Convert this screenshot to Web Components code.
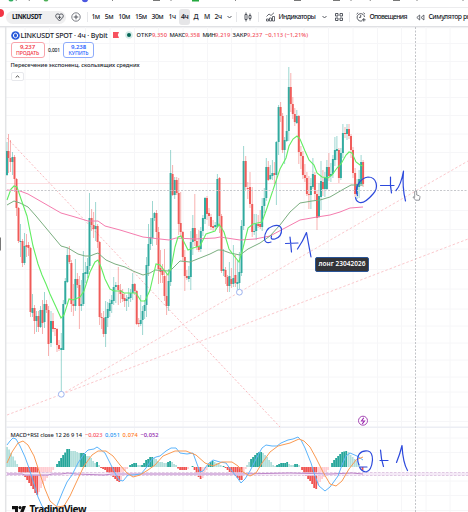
<!DOCTYPE html>
<html lang="ru">
<head>
<meta charset="utf-8">
<title>LINKUSDT</title>
<style>
    body { margin: 0; width: 468px; height: 512px; overflow: hidden; background: #fff; font-family: "Noto Sans", "Open Sans", sans-serif; color: #20232b; }
</style>
</head>
<body>
<trading-app></trading-app>

<script>
// text that is spread over a given width
class TvLabel extends HTMLElement {
    connectedCallback() {
        const root = this.attachShadow({ mode: 'open' });
        root.innerHTML = `<style>:host { display: block; flex: none; white-space: nowrap; line-height: 1.2; } span { display: inline-block; }</style><span><slot></slot></span>`;
        const w = +this.getAttribute('w');
        if (!w) return;
        const span = root.querySelector('span');
        this.style.width = w + 'px';
        const natural = span.getBoundingClientRect().width;
        span.style.letterSpacing = ((w - natural) / this.textContent.length).toFixed(3) + 'px';
    }
}

class BrowserStrip extends HTMLElement {
    constructor() {
        super();
        this.attachShadow({ mode: 'open' }).innerHTML = `
            <style>
                :host { display: block; flex: none; height: 8px; box-sizing: border-box; border-bottom: 1px solid #ececee; }
                svg { display: block; }
            </style>
            <svg width="468" height="7">
                <circle cx="11" cy="-1" r="2.6" fill="#2fae60"/><circle cx="46" cy="-1" r="2.5" fill="#4cae55"/>
                <circle cx="85" cy="-1" r="3.2" fill="#4b57e0"/><rect x="153" y="-3" width="7" height="4" fill="#777"/>
                <rect x="192" y="-3" width="7" height="4.5" fill="#24a83f"/><path d="M0 0l1-1M16 1l1-2M29 1l1-2M112.500 1v-1M171 1v-1M235 0l1 1M351 1v-1M370 1l1-2M417 1v-1M463 1v-1" stroke="#666" stroke-width=".8"/>
                <path d="M333 .5h7M393 .5h7M294 .5h7" stroke="#777"/>
            </svg>`;
    }
}

class ToolBar extends HTMLElement {
    constructor() {
        super();
        this.attachShadow({ mode: 'open' }).innerHTML = `
            <style>
                :host { display: flex; flex: none; align-items: center; height: 19px; padding-left: 6px; box-sizing: border-box; border-bottom: 1px solid #e0e1e4; box-shadow: 0 1px 1px #f1f1f3; font-size: 6.800px; font-weight: 500; position: relative; }
                .pill { display: flex; flex: none; align-items: center; width: 60px; height: 13px; padding-left: 6px; box-sizing: border-box; border-radius: 7px; background: #efeff0; font-weight: 700; font-size: 6.500px; gap: 13px; }
                svg { flex: none; fill: none; stroke: #444851; stroke-width: .9; }
                .line { width: 1px; height: 10px; background: #e6e7ea; flex: none; }
                .on { background: #e6e6e8; border-radius: 3px; padding: 3.500px 2px; margin: 0 -2px; }
                .badge { position: absolute; left: -5px; top: 1px; width: 9px; height: 8px; border-radius: 4px; background: #f23645; }
                .times { display: flex; align-items: center; margin-left: 4px; }
                b { font-weight: 600; }
            </style>
            <i class="badge"></i>
            <div class="pill"><tv-label w="29.500">LINKUSDT</tv-label>
                <svg width="9" height="9" viewBox="0 0 9 9"><path d="M4.500 8L1 4.200Q.2 2.500 1.500 1.200Q3 .5 4.500 1.500Q6 .5 7.500 1.200Q8.800 2.500 8 4.200zM4.500 2.500v3.500M2.800 4.300h3.400"/></svg>
            </div>
            <svg width="10" height="10" viewBox="0 0 10 10" style="margin-left:5px"><circle cx="5" cy="5" r="4.200" stroke-width=".7"/><path d="M5 2.700v4.600M2.700 5h4.600"/></svg>
            <i class="line" style="margin-left:5.500px"></i>
            <div class="times">
                <tv-label w="8" style="margin-right:5.300px">1м</tv-label>
                <tv-label w="8.500" style="margin-right:5px">5м</tv-label>
                <tv-label w="11.500" style="margin-right:5.300px">10м</tv-label>
                <tv-label w="11.500" style="margin-right:5px">15м</tv-label>
                <tv-label w="11.500" style="margin-right:5.300px">30м</tv-label>
                <tv-label w="7.500" style="margin-right:5px">1ч</tv-label>
                <div class="on" style="margin-right:3px"><tv-label w="7.500"><b>4ч</b></tv-label></div>
                <tv-label w="5" style="margin-right:5.500px">Д</tv-label>
                <tv-label w="6" style="margin-right:4.500px">М</tv-label>
                <tv-label w="7.500">2ч</tv-label>
            </div>
            <svg width="5" height="4" viewBox="0 0 5 4" style="margin-left:5px"><path d="M.5 1l2 2 2-2"/></svg>
            <i class="line" style="margin-left:4px"></i>
            <svg width="8" height="10" viewBox="0 0 8 10" style="margin-left:7.500px"><path d="M1 2.500h2v5H1zM2 .5v2M2 7.500v2M5 3.500h2v3H5zM6 1.500v2M6 6.500v2"/></svg>
            <i class="line" style="margin-left:6px"></i>
            <svg width="9" height="10" viewBox="0 0 9 10" style="margin-left:6.500px"><path d="M.5 9V7h2v2zM3.500 9V6h2v3zM6.500 9V4.500h2V9zM.5 4.500L3 2l2 1.500L8 .7" stroke-width=".8"/></svg>
            <tv-label w="37" style="margin-left:3.500px">Индикаторы</tv-label>
            <svg width="5" height="4" viewBox="0 0 5 4" style="margin-left:6.500px"><path d="M.5 1l2 2 2-2"/></svg>
            <svg width="8" height="8" viewBox="0 0 8 8" style="margin-left:8px"><path d="M.5.5h2.500v2.500H.5zM5 .5h2.500v2.500H5zM.5 5h2.500v2.500H.5zM5 5h2.500v2.500H5z"/></svg>
            <i class="line" style="margin-left:6.500px"></i>
            <svg width="10" height="10" viewBox="0 0 10 10" style="margin-left:5.500px"><path d="M6.200 8.800A3.700 3.700 0 1 1 8.500 5M4.700 3v2.400H3M.6 2.200L2.200.7M7.400.7L9 2.200M7.800 6v3.500M6 7.800h3.600" /></svg>
            <tv-label w="37.500" style="margin-left:3.500px">Оповещения</tv-label>
            <svg width="9" height="7" viewBox="0 0 9 7" style="margin-left:9.500px"><path d="M3.700 1v5L.8 3.500zM7.900 1v5L5 3.500z" stroke-width=".8"/></svg>
            <tv-label w="54" style="margin-left:3px">Симулятор рынка</tv-label>`;
    }
}

class ChartLegend extends HTMLElement {
    constructor() {
        super();
        this.attachShadow({ mode: 'open' }).innerHTML = `
            <style>
                :host { display: flex; flex-direction: column; font-size: 5.800px; font-weight: 500; }
                .row { display: flex; align-items: center; }
                .title { font-size: 7.100px; }
                svg { display: block; flex: none; }
                .red { color: #f2505c; }
                .btn { box-sizing: border-box; height: 16px; border: 1px solid; border-radius: 3px; display: flex; flex-direction: column; align-items: center; justify-content: center; background: #fff; font-size: 5.200px; }
                .btn tv-label { line-height: 6.500px; }
                .sell { width: 34px; color: #f23645; border-color: #f9a4ab; }
                .buy { width: 31px; color: #2962ff; border-color: #8dabfb; }
                .btn b { font-weight: 600; font-size: 6px; }
                .fold { width: 13px; height: 9px; box-sizing: border-box; border: 1px solid #e7e8ec; border-radius: 2px; background: #fff; margin-top: 3.500px; display: flex; align-items: center; justify-content: center; }
            </style>
            <div class="row" style="height:12px">
                <svg width="9" height="9" viewBox="0 0 9 9"><circle cx="4.500" cy="4.500" r="4.300" fill="#2a5ada"/><path d="M4.500 2.200l2 1.150v2.300l-2 1.150-2-1.150v-2.300z" fill="none" stroke="#fff" stroke-width="1"/></svg>
                <tv-label class="title" w="87" style="margin-left:1px">LINKUSDT SPOT · 4ч · Bybit</tv-label>
                <svg width="6" height="6" viewBox="0 0 6 6" style="margin-left:5.500px"><path d="M0 0h6L4.800 3 6 6H0z" fill="#f7525f"/></svg>
                <svg width="8" height="8" viewBox="0 0 8 8" style="margin-left:5.500px"><circle cx="4" cy="4" r="3.800" fill="#d5ebe8"/><circle cx="4" cy="4" r="2" fill="#056656"/></svg>
                <tv-label w="15.500" style="margin-left:4px">ОТКР</tv-label><tv-label class="red" w="15">9,350</tv-label>
                <tv-label w="15.500" style="margin-left:2.500px">МАКС</tv-label><tv-label class="red" w="15">9,358</tv-label>
                <tv-label w="12.500" style="margin-left:2.500px">МИН</tv-label><tv-label class="red" w="15.500">9,219</tv-label>
                <tv-label w="14.500" style="margin-left:2px">ЗАКР</tv-label><tv-label class="red" w="15.500">9,237</tv-label>
                <tv-label class="red" w="43" style="margin-left:2.500px">−0,113 (−1,21%)</tv-label>
            </div>
            <div class="row" style="margin-top:1px">
                <div class="btn sell"><tv-label w="15"><b>9,237</b></tv-label><tv-label w="23">ПРОДАТЬ</tv-label></div>
                <tv-label w="12" style="margin:0 3px 0 3.500px;font-size:5px">0,001</tv-label>
                <div class="btn buy"><tv-label w="15"><b>9,238</b></tv-label><tv-label w="20">КУПИТЬ</tv-label></div>
            </div>
            <tv-label w="129" style="margin-top:4px;font-size:5.800px">Пересечение экспоненц. скользящих средних</tv-label>
            <div class="fold"><svg width="5" height="3" viewBox="0 0 5 3"><path d="M.7 2.500l1.800-1.700 1.800 1.700" fill="none" stroke="#333" stroke-width=".9"/></svg></div>`;
    }
}

// x, open, close, high, low
const CANDLES = [
    [7,175,151,142,176],[8.5,151,158,134,173],[10.5,158,162,140,172],[12.5,162,157,152,175],[14.5,157,179,155,192],[16.5,179,208,178,216],
    [18.5,208,241,207,243],[20.5,242,241,224,257],[22.5,241,263,239,267],[24.5,263,246,233,265],[26.5,245,247,234,257],[28.5,245,248,242,256],
    [30.5,248,312,247,317],[32.5,313,308,294,317],[34.5,308,321,305,334],[36.5,321,316,311,332],[38.5,316,327,311,332],[40.5,327,310,306,328],
    [42.5,310,323,300,334],[44.5,322,304,292,328],[46.5,304,310,300,313],[48.5,310,344,306,356],[51,343,321,311,347],[53,321,329,313,332],
    [55,328,329,328,336],[57,329,345,328,352],[59,345,349,340,351],[61.3,350,348,333,392],[63.3,350,304,300,350],[65.3,304,281,278,305],
    [67.3,282,255,248,283],[69.4,255,262,246,264],[71.4,263,304,260,312],[73.4,304,306,284,316],[75.4,306,279,259,311],[77.4,279,285,273,288],
    [79.4,285,306,276,329],[81.4,306,304,280,311],[83.4,304,273,251,306],[85.4,274,272,262,283],[87.5,274,266,258,278],[89.5,266,218,193,270],
    [91.6,218,225,209,231],[93.6,225,229,212,238],[95.6,229,226,202,241],[97.6,226,242,224,248],[99.6,242,317,241,325],[101.6,317,318,313,329],
    [103.6,318,334,311,337],[105.6,334,317,301,347],[107.7,318,309,302,327],[109.7,311,303,299,317],[111.7,304,300,295,313],[113.7,301,287,277,305],
    [115.8,287,285,282,303],[118.3,285,290,267,305],[120.5,290,294,284,303],[122.6,294,299,289,302],[124.6,298,301,293,307],[126.6,301,299,295,311],
    [128.6,299,297,288,307],[130.6,298,293,289,302],[132.7,293,284,273,300],[134.7,284,291,283,295],[136.7,291,324,290,325],[138.7,323,324,318,327],
    [140.7,324,320,295,326],[142.6,320,311,306,335],[144.6,311,305,300,319],[146.5,305,265,257,317],[148.5,266,244,224,276],[150.5,244,237,218,250],
    [152.5,238,218,201,246],[154.5,218,213,212,221],[156.5,213,232,210,245],[158.5,232,269,227,284],[160.5,268,272,250,283],[162.5,271,275,264,283],
    [164.5,276,296,249,301],[166.6,296,306,273,315],[168.6,306,281,269,311],[170.6,282,173,150,286],[172.6,174,195,165,196],[174.7,195,180,177,199],
    [176.7,180,193,177,195],[178.7,193,224,178,235],[180.7,223,232,192,237],[182.8,232,257,231,262],[184.8,257,276,250,291],[186.8,276,278,270,280],
    [188.8,279,276,266,282],[190.8,277,242,231,290],[192.8,242,228,215,255],[194.8,228,241,194,246],[196.8,241,247,234,250],[198.8,246,250,230,252],
    [200.8,249,231,227,252],[202.9,231,218,215,236],[205,219,198,197,224],[207,198,214,196,220],[209,213,216,208,226],[211,217,227,214,230],
    [213.1,226,228,220,231],[215.2,227,225,222,230],[217.4,227,179,174,228],[219.5,178,216,177,233],[221.5,216,271,214,273],[223.5,271,269,249,276],
    [225.5,270,277,267,284],[227.5,277,286,275,292],[229.4,286,276,262,292],[231.4,279,284,268,288],[233.4,284,278,245,287],[235.4,275,283,255,287],
    [237.4,284,282,260,290],[239.4,283,272,252,290],[241.5,273,226,220,276],[243.6,226,161,146,230],[245.7,161,187,156,190],[247.8,188,189,182,199],
    [250,187,204,172,208],[252.2,204,232,187,237],[254.2,232,231,214,235],[256.2,231,224,214,240],[258.2,224,226,215,228],[260.2,224,227,210,229],
    [262.2,227,206,198,231],[264.3,206,198,188,213],[266.3,198,167,158,201],[268.3,167,180,161,181],[270.3,179,175,165,180],[272.4,176,173,160,180],
    [274.4,173,175,162,184],[276.4,175,142,141,205],[278.6,142,107,105,155],[280.6,107,116,102,122],[282.6,116,150,113,153],[284.6,150,140,137,164],
    [286.7,141,131,115,142],[288.8,131,87,67,141],[290.8,87,104,73,112],[292.8,104,114,97,119],[294.8,114,122,108,126],[296.8,123,116,110,124],
    [298.8,116,152,115,164],[300.9,152,156,146,169],[302.9,156,175,151,179],[304.9,175,178,164,182],[306.9,178,194,172,196],[308.9,194,195,176,209],
    [310.9,195,186,178,209],[312.9,187,174,158,189],[314.9,175,194,172,201],[317,194,218,190,230],[319,217,196,183,218],[321,197,181,161,210],
    [322.9,182,189,170,196],[324.9,189,178,172,197],[326.9,189,167,160,190],[328.9,167,176,153,181],[330.9,176,174,163,182],[332.9,174,159,155,178],
    [334.9,160,150,137,166],[336.9,151,149,136,160],[338.9,150,178,148,183],[340.9,178,153,148,180],[342.9,153,133,124,158],[345,133,134,127,138],
    [347,134,129,124,140],[349,129,136,124,139],[351,136,150,134,158],[353,150,173,147,178],[355.1,173,194,168,197],[357.1,194,184,179,199],
    [359.1,187,179,170,198],[361.1,184,162,155,186],[363.1,162,184,160,187]
];

const FAST = '7,200 11,189 14,186 17,187 21,199 27,216 33,246 38,264 42,275 46,284 50,294 56,307 61,318 64,315 69,299 73,300 80,297 84,291 90,272 95,262 98,260 101,267 105,279 110,289 114,291 121,291 124,293 130,293 136,293 141,301 145,301 150,290 156,264 160,265 168,275 171,268 175,247 178,237 181,236 185,244 188,250 193,248 200,246 206,234 215,231 219,224 224,232 229,249 235,257 239,262 243,248 248,228 253,224 262,222 267,208 275,184 280,169 286,158 289,146 293,139 297,136 300,139 305,151 309,160 314,165 317,173 322,177 328,178 332,175 337,168 341,164 346,155 349,152 352,153 356,162 360,165 363,166';
const MID = '7,205 14,201 20,203 28,207 36,216 61,246 68,248 78,254 85,256 90,256 95,254 98,253 106,260 115,264 125,267 133,271 143,275 150,273 155,270 168,271 172,269 180,261 190,262 200,258 210,254 218,250 222,250 230,253 240,255 248,249 260,243 270,236 280,225 290,212 300,203 312,201 320,200 330,197 342,190 351,185 363,185';
const SLOW = '7,190 20,191 28,194 61,213 75,217 88,221 98,221 105,226 120,230 143,237 160,239 169,240 176,238 195,239 215,238 220,237 240,240 255,239 270,236 285,228 300,220 317,217 330,215 340,212 350,208 363,207';
const MACD = '7,445 10,441 13,438 16,439 20,446 25,457 29,468 33,481 38,497 42,506 50,514 56,508 63,491 67,482 72,475 78,463 84,454 88,450 94,449 97,447 101,450 105,453 110,463 116,475 119,480 123,481 128,475 133,475 141,474 146,468 152,459 156,457 160,456 166,451 171,448 176,448 180,453 187,454 193,453 197,464 200,472 203,471 208,464 213,460 220,462 226,463 231,470 236,476 241,483 245,479 250,471 256,459 262,448 266,445 272,446 277,446 281,443 288,440 293,439 298,437 301,440 305,448 311,463 315,476 319,486 325,491 330,487 338,476 342,465 346,456 350,453 357,456 363,460';
const SIGNAL = '7,463 12,452 18,443 23,441 28,445 34,456 40,474 45,489 50,501 57,507 64,506 70,496 76,483 84,466 92,455 98,451 106,451 113,456 120,465 127,473 133,477 140,475 148,470 155,465 163,456 175,451 186,451 196,455 205,463 213,466 222,462 232,462 238,466 243,472 250,476 256,473 262,463 270,452 278,446 290,443 299,439 304,441 310,447 316,458 323,472 330,484 336,486 342,481 349,469 356,460 363,457';
const RSI = '7,474 22,474 25,475 48,475 52,474 61,474 68,473 76,474 104,475 112,474 170,474 200,474 240,474 290,473 330,474 352,473 363,474';

// start x, colour, bar heights (negative goes under the zero line)
const G = '#26a69a', g = '#b2dfdb', R = '#f05350', r = '#ffcdd2';
const BARS = [
    [7,g,[20,17.5,14,10.5,6.5,3]],[19,R,[-5,-6,-8,-10,-13,-16,-19,-22,-26,-28]],[39,r,[-25,-21,-17,-14,-11,-8,-5,-3]],
    [57,G,[3,6,9,12,14.5,18,18]],[71,g,[16,16,16,15,14]],[81,G,[14,14,13]],[87,g,[11,11,9,6,4]],[97,G,[5]],[99,g,[2]],
    [101,R,[-1,-2,-3,-5,-6,-8,-10,-12,-14,-15]],[121,r,[-13,-9,-4,-2]],[130,G,[2,3,4,4]],[138,g,[2,2]],[142,G,[2,4,7,8,10,10]],[154,g,[9,8,6,5,5,4,4]],
    [168,G,[5,6]],[172,g,[5,3,2]],[178,R,[-1.5,-3,-3,-3,-3]],[188,r,[-2]],[192.500,G,[1]],[194.500,R,[-3,-7,-10,-12]],[202.600,r,[-11,-7,-3]],
    [208.500,G,[2,5,6]],[214.600,g,[5,4,4,2]],[223.500,G,[1]],[225.500,R,[-1,-3,-5,-7,-8,-9,-11,-13,-13]],[243.700,r,[-7,-2]],
    [247,g,[2,5]],[251,G,[8,10,12,14,15,15]],[263,g,[14,12,10,7,5,2,1]],[277,G,[2,3,4,4,4,5]],[289,g,[3,2,2]],[295,G,[3,3]],[299,g,[2]],
    [302,R,[-3,-7,-9,-12,-14,-17,-21,-22]],[318,r,[-18,-15,-12,-10,-6,-3]],[332,G,[4,7,9,11,13,15,15.5,16]],[348.500,g,[15,12,10,8,6,3]],[362.500,R,[-3]]
];

class PriceChart extends HTMLElement {
    constructor() {
        super();
        const xs = [25,49.5,85.5,110,134.5,158.5,183,207.5,231.5,256,280,304,328.5,353,377.5,401.5,426,450];
        const ys = [43.5,61.5,79.5,97.5,115.5,134,152.5,171.5,210.5,229.5,249,269.5,289,309,326,343,360,377,392,407,421.5,438,452.5,481,495.5,510.5];
        const grid = xs.map(x => `M${x} 27V512`).join('') + ys.map(y => `M6 ${y}H468`).join('');
        const candles = CANDLES.map(([x, o, c, h, l]) => {
            const col = c < o ? '#26a69a' : '#ef5350';
            const y = Math.min(o, c);
            return `<path d="M${x} ${h}V${l}" stroke="${col}" stroke-width=".9" opacity=".5"/><rect x="${x - 1}" y="${y}" width="2" height="${Math.max(1, Math.abs(o - c))}" fill="${col}" opacity=".92"/>`;
        }).join('');
        const bars = BARS.map(([x0, col, hs]) => hs.map((v, i) =>
            `<rect x="${x0 + i * 2.02 - .85}" y="${v > 0 ? 467 - v : 467}" width="1.800" height="${Math.abs(v)}" fill="${col}"/>`).join('')).join('');

        this.attachShadow({ mode: 'open' }).innerHTML = `
            <style>
                :host { display: block; flex: none; position: relative; height: 485px; overflow: hidden; }
                svg { display: block; fill: none; }
                chart-legend { position: absolute; left: 10.500px; top: 2px; }
                .macd { position: absolute; left: 10.500px; top: 404.500px; display: flex; gap: 2.500px; font-size: 5.700px; font-weight: 500; }
                .note { position: absolute; left: 315px; top: 229.500px; width: 54px; height: 15px; box-sizing: border-box; border: 1px solid #2a5598; border-radius: 2px; background: #333438; color: #fff; font-size: 6.500px; font-weight: 600; display: flex; align-items: center; justify-content: center; }
                .brand { position: absolute; left: 12px; top: 475.500px; display: flex; align-items: flex-start; font-size: 10px; font-weight: 700; color: #111; }
                .brand svg { margin-top: 3px; }
            </style>
            <svg width="468" height="485" viewBox="0 27 468 485">
                <path d="${grid}" stroke="#f6f6f8"/>
                <path d="M5.700 27V512" stroke="#e3e4e6" stroke-width="1.500"/>
                <path d="M0 237.500h1v13H0z" fill="#777"/>
                <path d="M6 427.200H468" stroke="#eceef4" stroke-width="1.600"/>
                <path d="M6 183.500H363" stroke="#fbdfe2" />
                <path d="M7 138L280 427" stroke="#fab9be" stroke-dasharray="2 2"/>
                <path d="M61 394.500L468 161M7 415L61 394.500L468 239" stroke="#fbc9cd" stroke-dasharray="2.500 2"/>
                ${candles}
                <polyline points="${SLOW}" stroke="#f57cae"/>
                <polyline points="${MID}" stroke="#7bae80"/>
                <polyline points="${FAST}" stroke="#62ed62" stroke-width="1.100"/>
                <path d="M6 190.500H468" stroke="#c7c8cc" stroke-dasharray="2 1.500"/>
                ${bars}
                <path d="M6 472.500H468V475.500H6z" fill="#f5eaf7"/>
                <path d="M6 472.500H468M6 475.500H468" stroke="#d9bfdd" stroke-width=".8" stroke-dasharray="2.500 1.500"/>
                <polyline points="${RSI}" stroke="#b779c3" stroke-width=".9"/>
                <polyline points="${MACD}" stroke="#5cb4fb"/>
                <polyline points="${SIGNAL}" stroke="#fa9a52"/>
                <path d="M415.500 27V512" stroke="#c2c4c8" stroke-dasharray="2 1.500"/>
                <g fill="#fff" stroke="#9db4f0"><circle cx="61.300" cy="394.300" r="2.900"/><circle cx="239.400" cy="292.200" r="2.900"/></g>
                <circle cx="363" cy="420.700" r="4.500" fill="#fff" stroke="#a64bb5"/><path d="M363.800 417.800l-2.300 3.200h3l-2.300 2.900" stroke="#9c27b0" stroke-width="1.100"/>
                <g stroke="#2c49dc" stroke-width="1.200" stroke-linecap="round" stroke-linejoin="round">
                    <path d="M271 242Q265 244 264.500 239Q264.500 229 273 226Q280 224 281.500 229Q282 237 275 239Q270 240 271.500 236"/>
                    <path d="M285.500 243.500L298 243M290 237Q291 246 291.500 252M297.500 249Q303 241 306.500 232.500Q308.500 244 311 257"/>
                    <path d="M357.500 195.500C354 188 360 178 368 177C377 177 379 188 373 194C367 201 362 204 358.500 202Q356 201 355.500 197.500"/>
                    <path d="M380.500 185.500H394M390.500 177Q390 186 391.500 193M396 190.500Q401 185 403.500 171Q402 187 405.500 201"/>
                    <path d="M359 465C355 455 361 450 368 451Q372.500 452 372.500 460Q371.500 471 366 472Q361 471 359.500 467H367"/>
                    <path d="M380 460.500h8M380.500 450Q381 459 383.500 466.500M396.500 462.500Q400 454 402 445.500Q403 463 407.500 470.500"/>
                </g>
                <path d="M414.700 197.500v-5.500q0-1.200 1-1.200t1 1.200v3l2.500.7q1 .5.700 2l-.6 2.500h-3.700l-2.500-3q-.3-1 1.600.3z" fill="#fff" stroke="#777b82" stroke-width=".8"/>
            </svg>
            <chart-legend></chart-legend>
            <div class="macd">
                <tv-label w="71.500">MACD+RSI close 12 26 9 14</tv-label>
                <tv-label w="17.500" style="color:#f7525f;margin-left:.5px">−0,023</tv-label>
                <tv-label w="15" style="color:#2196f3">0,051</tv-label>
                <tv-label w="15.500" style="color:#ff7a1a">0,074</tv-label>
                <tv-label w="18" style="color:#8e24aa">−0,052</tv-label>
            </div>
            <div class="note"><tv-label w="47">лонг 23042026</tv-label></div>
            <div class="brand">
                <svg width="14" height="9" viewBox="0 0 14 9" style="fill:#111"><path d="M0 0h6v9H3V3.200H0zM10.500 0H14l-3.600 9H7z"/><circle cx="8" cy="1.600" r="1.600"/></svg>
                <tv-label w="56.500" style="margin-left:3.500px">TradingView</tv-label>
            </div>`;
    }
}

class TradingApp extends HTMLElement {
    constructor() {
        super();
        this.attachShadow({ mode: 'open' }).innerHTML = `
            <style>:host { display: flex; flex-direction: column; width: 468px; height: 512px; overflow: hidden; }</style>
            <browser-strip></browser-strip>
            <tool-bar></tool-bar>
            <price-chart></price-chart>`;
    }
}

customElements.define('tv-label', TvLabel);
customElements.define('browser-strip', BrowserStrip);
customElements.define('tool-bar', ToolBar);
customElements.define('chart-legend', ChartLegend);
customElements.define('price-chart', PriceChart);
customElements.define('trading-app', TradingApp);
</script>
</body>
</html>
